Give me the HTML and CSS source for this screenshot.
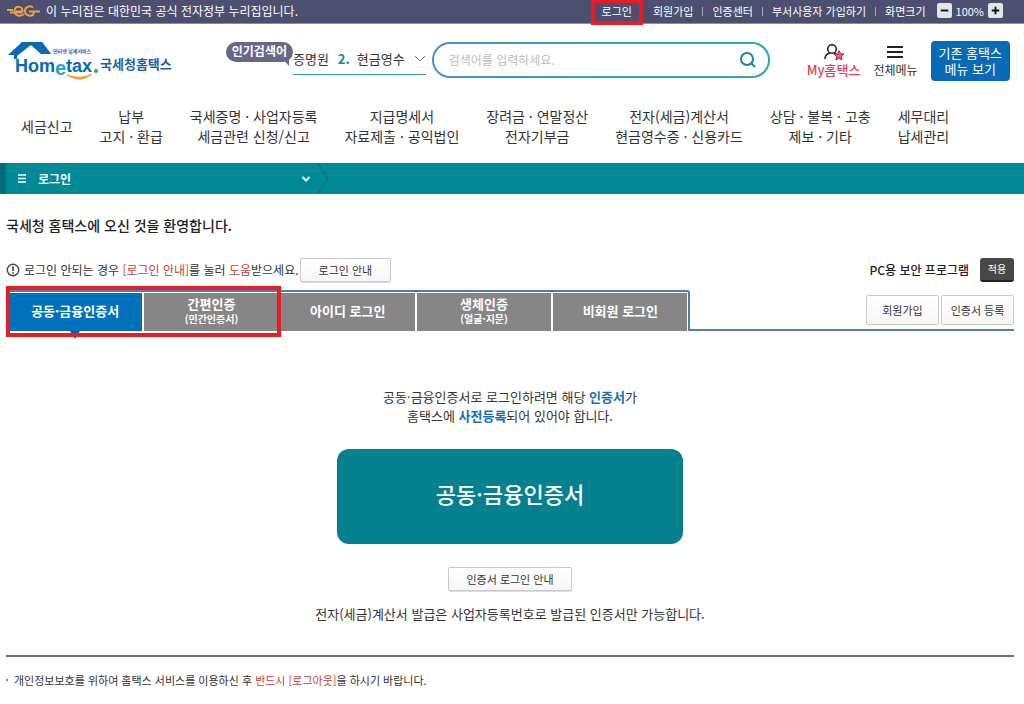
FILE: index.html
```html
<!DOCTYPE html>
<html lang="ko">
<head>
<meta charset="utf-8">
<meta name="viewport" content="width=device-width, initial-scale=1">
<title>국세청 홈택스 로그인</title>
<link rel="stylesheet" href="styles.css">
</head>
<body>
<div class="topbar">
  <svg class="eg" viewBox="0 0 34 16" aria-hidden="true">
    <g fill="none" stroke="#f0a045" stroke-width="2">
      <path d="M0 7H6M3 9.500H15"/>
      <path d="M9 8.500H15.500C16 3 8 2 7.500 7.500C7.500 13 13 14 17 11"/>
      <path d="M26 4.500C22 2 18 4 18 8C18 13 25 14 26.500 11V8.500H22M26.500 8.500H33"/>
    </g>
  </svg>
  <p class="gov">이 누리집은 대한민국 공식 전자정부 누리집입니다.</p>
  <ul class="util">
    <li class="marked"><a href="#">로그인</a></li>
    <li><a href="#">회원가입</a></li>
    <li><a href="#">인증센터</a></li>
    <li><a href="#">부서사용자 가입하기</a></li>
    <li>화면크기</li>
  </ul>
  <div class="zoom">
    <button type="button" aria-label="축소"><svg viewBox="0 0 16 16"><path d="M4 8H12" stroke="#111" stroke-width="2"/></svg></button>
    <span>100%</span>
    <button type="button" aria-label="확대"><svg viewBox="0 0 16 16"><path d="M4 8H12M8 4V12" stroke="#111" stroke-width="2"/></svg></button>
  </div>
</div>

<header class="header">
  <a class="logo" href="#">
    <svg viewBox="0 0 92 40" role="img" aria-label="Hometax">
      <path d="M0 14L14 1H34L43 13H34L23 4L9 15V18H6V14Z" fill="#0869b4"/>
      <path d="M22 3L34 1L43 13H33Z" fill="#0869b4"/>
      <text class="logo-tag" x="45" y="12">인터넷 납세서비스</text>
      <text class="logo-word" x="7" y="31">Hom</text>
      <text class="logo-e" x="47" y="34">e</text>
      <text class="logo-word" x="58" y="31">tax</text>
      <circle cx="88" cy="30" r="2" fill="#3aa648"/>
      <path d="M59 34Q73 43 84 33Q73 39 59 34Z" fill="#eda23c" stroke="#eda23c"/>
    </svg>
    <span>국세청홈택스</span>
  </a>
  <div class="popular">
    <strong class="bubble">인기검색어</strong>
    <div class="words">
      <span>증명원</span><b>2.</b><span>현금영수</span>
      <svg viewBox="0 0 12 8" aria-hidden="true"><path d="M1 1L6 6L11 1" fill="none" stroke="#777"/></svg>
    </div>
  </div>
  <form class="search">
    <input type="text" aria-label="검색어" placeholder="검색어를 입력하세요.">
    <button type="button" aria-label="검색"><svg viewBox="0 0 18 18"><g fill="none" stroke="#148a94" stroke-width="2"><circle cx="8" cy="8" r="6"/><path d="M12 12L16 16"/></g></svg></button>
  </form>
  <a class="quick my" href="#">
    <svg viewBox="0 0 22 18" aria-hidden="true"><g fill="none" stroke="#25233a" stroke-width="1.600"><circle cx="9" cy="6" r="4.300"/><path d="M2 16C2 12 4.500 10.500 7 10M11 10L13 11"/></g><path d="M16 7.500L17.500 10.500L21 11L18.500 13.500L19 17L16 15.300L13 17L13.500 13.500L11 11L14.500 10.500Z" fill="#f0566e" stroke="#6b2638" stroke-width=".8"/></svg>
    <span>My홈택스</span>
  </a>
  <a class="quick" href="#">
    <svg viewBox="0 0 22 18" aria-hidden="true"><path d="M3 4H19M3 9H19M3 14H19" stroke="#222" stroke-width="2"/></svg>
    <span>전체메뉴</span>
  </a>
  <button class="old" type="button">기존 홈택스<br>메뉴 보기</button>
</header>

<nav class="nav">
  <a href="#">세금신고</a>
  <a href="#">납부<br>고지 · 환급</a>
  <a href="#">국세증명 · 사업자등록<br>세금관련 신청/신고</a>
  <a href="#">지급명세서<br>자료제출 · 공익법인</a>
  <a href="#">장려금 · 연말정산<br>전자기부금</a>
  <a href="#">전자(세금)계산서<br>현금영수증 · 신용카드</a>
  <a href="#">상담 · 불복 · 고충<br>제보 · 기타</a>
  <a href="#">세무대리<br>납세관리</a>
</nav>

<div class="band">
  <button class="crumb" type="button">
    <svg class="bars" viewBox="0 0 8 10" aria-hidden="true"><path d="M0 1H8M0 4.500H8M0 8H8" stroke="#fff" stroke-width="1.500"/></svg>
    <span>로그인</span>
    <svg class="down" viewBox="0 0 10 8" aria-hidden="true"><path d="M1.500 2L5 5.500L8.500 2" fill="none" stroke="#fff" stroke-width="2"/></svg>
  </button>
  <svg class="edge" viewBox="0 0 12 30" aria-hidden="true"><path d="M0 0L10 15L0 30" fill="none" stroke="#046370"/></svg>
</div>

<main class="main">
  <h1>국세청 홈택스에 오신 것을 환영합니다.</h1>
  <div class="notice">
    <svg viewBox="0 0 14 14" aria-hidden="true"><circle cx="7" cy="7" r="5.700" fill="none" stroke="#444" stroke-width="1.400"/><path d="M7 3.500V8M7 9.200V10.700" stroke="#333" stroke-width="1.600"/></svg>
    <p>로그인 안되는 경우 <em>[로그인 안내]</em>를 눌러 <em>도움</em>받으세요.</p>
    <button class="btn guide" type="button">로그인 안내</button>
    <div class="security"><strong>PC용 보안 프로그램</strong><button type="button">적용</button></div>
  </div>

  <div class="tabrow">
    <div class="tabs" role="tablist">
      <button class="tab on" type="button" role="tab" aria-selected="true">공동·금융인증서</button>
      <button class="tab" type="button" role="tab">간편인증<small>(민간인증서)</small></button>
      <button class="tab" type="button" role="tab">아이디 로그인</button>
      <button class="tab" type="button" role="tab">생체인증<small>(얼굴·지문)</small></button>
      <button class="tab" type="button" role="tab">비회원 로그인</button>
      <span class="mark"></span>
    </div>
    <div class="side">
      <button class="btn" type="button">회원가입</button>
      <button class="btn" type="button">인증서 등록</button>
    </div>
  </div>

  <section class="panel">
    <p class="lead">공동·금융인증서로 로그인하려면 해당 <b>인증서</b>가<br>홈택스에 <b>사전등록</b>되어 있어야 합니다.</p>
    <button class="cert" type="button">공동·금융인증서</button>
    <button class="btn help" type="button">인증서 로그인 안내</button>
    <p class="issue">전자(세금)계산서 발급은 사업자등록번호로 발급된 인증서만 가능합니다.</p>
  </section>

  <ul class="foot">
    <li>개인정보보호를 위하여 홈택스 서비스를 이용하신 후 <em>반드시 [로그아웃]</em>을 하시기 바랍니다.</li>
  </ul>
</main>
</body>
</html>
```

FILE: styles.css
```css
* { box-sizing: border-box; }
body {
  margin: 0;
  background: #fff;
  color: #333;
  font-family: "Noto Sans CJK KR", sans-serif;
  font-size: 12px;
  line-height: 18px;
}
p, h1, ul { margin: 0; padding: 0; }
ul { list-style: none; }
a { color: inherit; text-decoration: none; }
button, input { font: inherit; color: inherit; margin: 0; padding: 0; border: 0; background: none; }
svg { display: block; flex: none; }
em { font-style: normal; color: #c2413c; }

.topbar {
  display: flex;
  align-items: center;
  height: 24px;
  padding: 0 21px 2px 7px;
  background: #4c4f6f;
  border-bottom: 1px solid #8b8c9d;
  color: #fff;
  font-size: 11px;
}
.eg { width: 34px; height: 16px; }
.gov { margin-left: 5px; font-size: 12px; }
.util { display: flex; margin-left: auto; }
.util li { position: relative; padding: 0 9px 0 10px; }
.util li:nth-child(n + 3)::before {
  content: "";
  position: absolute;
  left: 0;
  top: 5px;
  height: 9px;
  border-left: 1px solid #a5a7b9;
}
.util .marked { padding: 0 11px; }
.marked::after {
  content: "";
  position: absolute;
  inset: -3px 0 -5px;
  border: 4px solid #e81c25;
}
.zoom { display: flex; align-items: center; gap: 4px; margin-left: 2px; }
.zoom button { width: 15px; height: 15px; border-radius: 2px; background: #dfe6e8; }

.header {
  display: flex;
  align-items: flex-start;
  height: 71px;
  padding: 17px 14px 0 8px;
}
.logo { display: flex; align-items: flex-start; color: #1c62a3; font-size: 13px; font-weight: 700; }
.logo svg { width: 92px; height: 40px; }
.logo span { margin-top: 14px; }
.logo-tag { font-size: 5px; fill: #1c62a3; }
.logo-word { font: 700 18px "Liberation Sans", sans-serif; fill: #0869b4; }
.logo-e { font: 700 20px "Liberation Sans", sans-serif; fill: #18a5cf; }
.popular { display: flex; margin-left: 54px; }
.bubble {
  position: relative;
  height: 20px;
  margin-top: 1px;
  padding: 0 6px;
  border-radius: 10px;
  background: #666887;
  color: #fff;
  white-space: nowrap;
}
.bubble::after {
  content: "";
  position: absolute;
  right: 4px;
  top: 16px;
  border-left: 7px solid transparent;
  border-top: 8px solid #666887;
}
.words {
  display: flex;
  align-items: center;
  gap: 7px;
  height: 34px;
  padding-top: 3px;
  border-bottom: 1px solid #2b9aa8;
  white-space: nowrap;
}
.words span { font-size: 13px; }
.words b { margin-left: 2px; color: #148a94; font-size: 13px; }
.words svg { width: 12px; height: 8px; margin-left: 2px; }
.search {
  display: flex;
  align-items: center;
  flex: 1;
  height: 36px;
  margin: 1px 37px 0 6px;
  padding: 0 11px 0 15px;
  border: 2px solid transparent;
  border-radius: 18px;
  background: linear-gradient(#fff, #fff) padding-box, linear-gradient(90deg, #4591d0, #2ba8ac 60%) border-box;
}
.search input { flex: 1; min-width: 0; outline: 0; }
.search input::placeholder { color: #bbb; opacity: 1; }
.search svg { width: 18px; height: 18px; }
.quick { display: flex; flex-direction: column; align-items: center; margin: 2px 13px 0 0; white-space: nowrap; }
.quick svg { width: 22px; height: 18px; }
.my { color: #dc4260; font-weight: 500; }
.my span { font-size: 13px; }
.old {
  height: 40px;
  padding: 0 8px;
  border-radius: 4px;
  background: #0869b4;
  color: #fff;
  font-size: 13px;
  line-height: 16px;
  white-space: nowrap;
}

.nav {
  display: flex;
  align-items: center;
  gap: 27px;
  height: 68px;
  padding: 0 21px 7px;
  font-size: 14px;
  line-height: 20px;
  text-align: center;
  white-space: nowrap;
}

.band { display: flex; height: 31px; background: #008996; border-left: 6px solid #046b78; }
.crumb {
  display: flex;
  align-items: center;
  width: 312px;
  padding: 0 7px 0 12px;
  color: #fff;
  font-weight: 700;
}
.bars { width: 8px; height: 10px; margin-right: 12px; }
.down { width: 10px; height: 8px; margin-left: auto; }
.edge { width: 12px; height: 31px; }

.main { padding: 21px 10px 0 6px; }
h1 { font-size: 14px; line-height: 20px; font-weight: 500; color: #222; }
.notice { display: flex; align-items: center; height: 32px; margin-top: 19px; }
.notice svg { width: 14px; height: 14px; margin-right: 4px; }
.btn {
  height: 24px;
  border: 1px solid #c9c9c9;
  border-radius: 2px;
  background: linear-gradient(#fff, #f6f6f6);
  box-shadow: 0 1px 0 #ddd;
  color: #333;
  font-size: 11px;
  white-space: nowrap;
}
.guide { margin-left: 1px; padding: 0 18px; }
.security { display: flex; align-items: center; gap: 11px; margin-left: auto; }
.security strong { font-weight: 500; color: #222; }
.security button {
  width: 34px;
  height: 24px;
  border-radius: 3px;
  border-bottom: 2px solid #222;
  background: #484848;
  color: #fff;
  font-size: 10px;
}

.tabrow { display: flex; margin-top: 4px; }
.tabs {
  position: relative;
  display: flex;
  gap: 2px;
  flex: 21;
  height: 41px;
  padding: 1px 1px 0 2px;
  border: solid #4f7fad;
  border-width: 2px 2px 0 0;
  border-radius: 0 3px 0 0;
}
.tab {
  position: relative;
  display: flex;
  flex-direction: column;
  align-items: center;
  justify-content: center;
  flex: 1;
  padding-bottom: 3px;
  background: #868686;
  color: #fff;
  font-size: 13px;
  line-height: 16px;
  font-weight: 700;
}
.tab small { font-size: 10px; line-height: 14px; }
.on { background: #0072bc; }
.on::after {
  content: "";
  position: absolute;
  left: 50%;
  top: 100%;
  margin-left: -5px;
  border: solid transparent;
  border-width: 8px 5px 0;
  border-top-color: #0d5d9c;
}
.mark {
  position: absolute;
  left: 0;
  top: -6px;
  width: calc(40% + 2px);
  height: 51px;
  border: 4px solid #e81c25;
}
.side {
  display: flex;
  justify-content: flex-end;
  gap: 2px;
  flex: 10;
  padding-top: 5px;
  border-bottom: 2px solid #4f7fad;
}
.side .btn { width: 73px; height: 30px; box-shadow: none; }

.panel { display: flex; flex-direction: column; align-items: center; padding: 56px 0 32px; font-size: 13px; }
.lead { line-height: 19px; text-align: center; }
.lead b { color: #1670b5; font-weight: 700; }
.cert {
  width: 346px;
  height: 95px;
  margin: 24px 0 23px;
  padding-bottom: 8px;
  border-radius: 12px;
  background: #04808f;
  color: #fff;
  font-size: 22px;
  font-weight: 500;
}
.help { padding: 0 17px; }
.issue { margin-top: 14px; }

.foot { padding-top: 14px; border-top: 2px solid #6b706d; font-size: 11px; }
.foot li { position: relative; padding-left: 8px; }
.foot li::before { content: ""; position: absolute; left: 0; top: 8px; width: 2px; height: 2px; background: #888; }
```
